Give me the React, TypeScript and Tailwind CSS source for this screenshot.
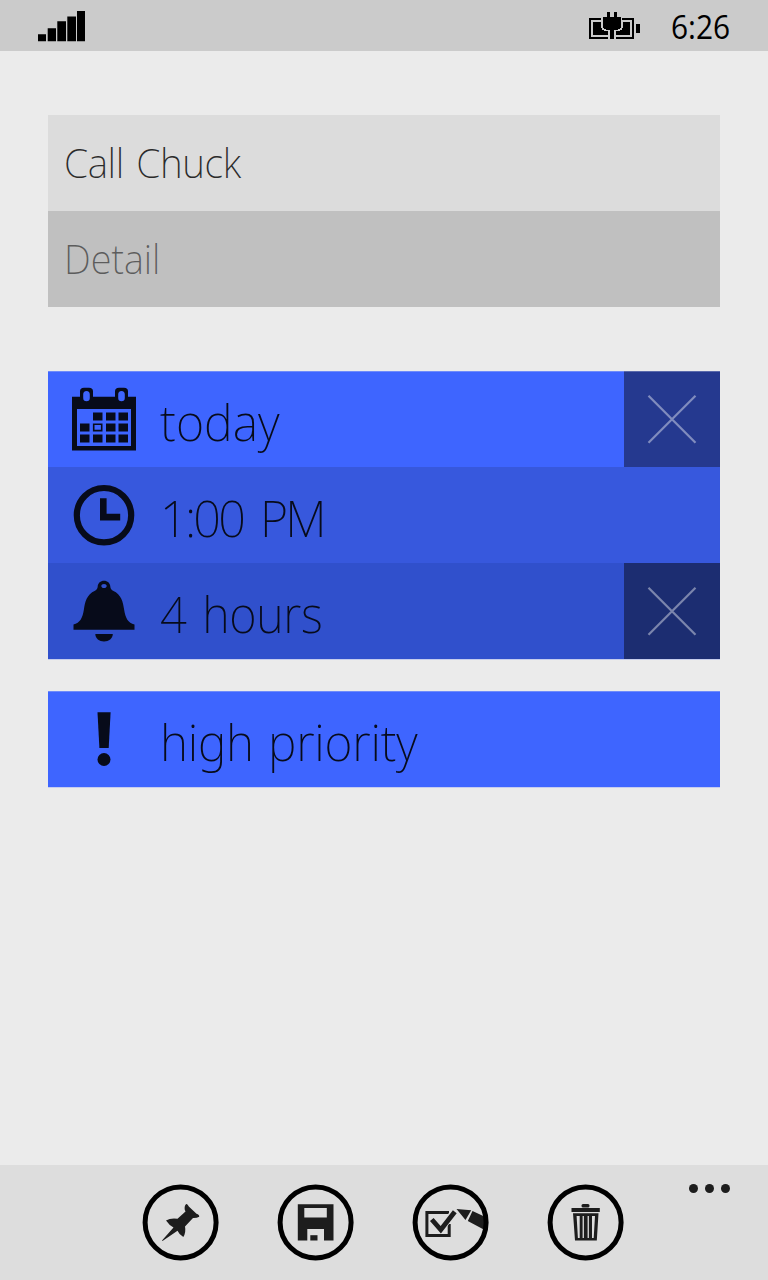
import type { ReactNode } from "react";

const INK = "#070b1a";

function Signal() {
  return (
    <svg width="48" height="32" viewBox="0 0 48 32" fill="#000">
      <path d="M0 24.200h8V31.300H0zM9.700 18.200H18V31.300H9.700zM19.300 11.300H28V31.300h-8.700zM29.300 6.400H38V31.300h-8.700zM39 .9h8v30.400h-8z" />
    </svg>
  );
}

function Battery() {
  return (
    <svg width="51" height="28" viewBox="0 0 51 28" fill="#000" shapeRendering="crispEdges">
      <path d="M0 6h12v2H2v17h17v2H0zM33 6h12v21H27v-2h16V8H33z" />
      <path d="M4 10h8v6h1v2h2v1h4v4H4zM34 10h7v13H27v-4h4v-1h2v-2h1z" />
      <path d="M18 0h3v5h4V0h3v5h4v11h-1v1h-2v1h-4v9h-4v-9h-4v-1h-2v-1h-1V5h4zM47 12h4v9h-4z" />
    </svg>
  );
}

function CalendarIcon() {
  return (
    <svg width="64" height="64" viewBox="0 -.4 64 64" fill={INK}>
      <path
        fillRule="evenodd"
        d="M0 9.300h8V4q0-3.700 4-3.700h5q4 0 4 3.700v5.300h22V4q0-3.700 4-3.700h5q4 0 4 3.700v5.300h8V63H0zM5 21.500v37h54v-37zM14.500 3.500q-3.300 0-3.300 3.500v3.500q0 3.300 3.300 3.300t3.300-3.300V7q0-3.500-3.300-3.500zM49.500 3.500q-3.300 0-3.300 3.500v3.500q0 3.300 3.300 3.300t3.300-3.300V7q0-3.500-3.300-3.500z"
      />
      <path d="M21 25h9.500v8H21zM34 25h9.500v8H34zM46.500 25H56v8h-9.500zM8 36h9.500v8H8zM34 36h9.500v8H34zM46.500 36H56v8h-9.500zM8 47h9.500v8H8zM21 47h9.500v8H21zM34 47h9.500v8H34zM46.500 47H56v8h-9.500z" />
      <path d="M21.700 36.800h8v6.400h-8z" fill="none" stroke={INK} strokeWidth="1.600" />
    </svg>
  );
}

function ClockIcon() {
  return (
    <svg width="64" height="64" viewBox="0 -.2 64 64">
      <circle cx="32" cy="32" r="27.200" fill="none" stroke={INK} strokeWidth="6.200" />
      <path d="M28 15h6.600v15.600h13.600v6.800H28z" fill={INK} />
    </svg>
  );
}

function BellIcon() {
  return (
    <svg width="64" height="64" viewBox="0 0 64 64" fill={INK}>
      <path
        fillRule="evenodd"
        d="M32 1.700c-3.500 0-6.100 2.300-6.300 5.800-.2 2.100-1 3.300-2.700 4.200C14.500 15.500 13 23 11.900 30.500 10.600 39 8 44 1.500 45.500v5.300h61v-5.300c-6.500-1.500-9.100-6.500-10.400-15C51 23 49.500 15.500 41 11.700c-1.700-.9-2.500-2.100-2.700-4.200-.2-3.500-2.800-5.800-6.300-5.800zM32 4.900c1.600 0 2.700.8 2.700 2.100S33.600 9.100 32 9.100 29.300 8.300 29.300 7s1.100-2.100 2.700-2.100z"
      />
      <path d="M23.300 55h17.500c0 4.500-4 7.500-8.800 7.500S23.300 59.500 23.300 55z" />
    </svg>
  );
}

function PriorityIcon() {
  return (
    <svg width="64" height="64" viewBox="0 0 64 64" fill={INK}>
      <path d="M25.500 5.200h13.100L36.700 41h-9.300z" />
      <circle cx="32" cy="52.500" r="6.500" />
    </svg>
  );
}

function RemoveButton({ color }: { color: string }) {
  return (
    <button aria-label="remove" className={`flex h-24 w-24 items-center justify-center ${color}`}>
      <svg width="50" height="50" viewBox="0 -.3 50 50" stroke="#fff" strokeOpacity=".42" strokeWidth="2.200">
        <path d="M1.500 1.500l47 47M48.500 1.500l-47 47" />
      </svg>
    </button>
  );
}

type RowProps = { icon: ReactNode; label: string; row: string; text: string; remove?: string };

function Row({ icon, label, row, text, remove }: RowProps) {
  return (
    <div className={`flex h-24 ${row}`}>
      <div className="flex h-24 w-28 items-center justify-center">{icon}</div>
      <div className={`h-24 flex-1 origin-left text-[50px] leading-[102px] font-extralight whitespace-nowrap text-[#070b1a] ${text}`}>{label}</div>
      {remove && <RemoveButton color={remove} />}
    </div>
  );
}

function BarButton({ label, children }: { label: string; children: ReactNode }) {
  return (
    <button aria-label={label} className="h-[78px] w-[78px]">
      <svg width="78" height="78" viewBox="0 0 78 78" fill="#1d1d1d">
        {children}
        <circle cx="39.600" cy="39.400" r="35.500" fill="none" stroke="#000" strokeWidth="5" />
      </svg>
    </button>
  );
}

export default function App() {
  return (
    <div className="flex h-[1280px] w-[768px] flex-col overflow-hidden bg-[#ebebeb] font-['Noto_Sans',sans-serif]">
      <header className="flex h-[51px] items-start bg-[#cbcbcb] pt-[10px] pr-[38px] pl-[38px]">
        <Signal />
        <div className="mt-[2px] ml-auto">
          <Battery />
        </div>
        <div className="ml-[31px] w-[59px] origin-left scale-x-[0.935] font-['Open_Sans',sans-serif] text-[32px] leading-[33px] whitespace-nowrap text-black">6:26</div>
      </header>

      <main className="flex flex-1 flex-col px-12 pt-16">
        <div className="h-24 bg-[#dcdcdc] pl-4">
          <div className="origin-left scale-x-[0.95] text-[41px] leading-[94px] font-extralight tracking-[-0.400px] [word-spacing:3px] text-[#2b2b2b]">Call Chuck</div>
        </div>
        <div className="h-24 bg-[#c0c0c0] pl-4">
          <div className="origin-left scale-x-[0.93] text-[41px] leading-[94px] font-extralight text-[#5c5c5c]">Detail</div>
        </div>

        <div className="mt-16 shadow-[0_1px_0_#c5ccec]">
          <Row
            icon={<CalendarIcon />}
            label="today"
            row="bg-[#3e65ff] shadow-[inset_0_1px_0_#6f8bfa]"
            text="scale-x-[0.97]"
            remove="bg-[#25398f] shadow-[inset_0_1px_0_#5a6aab]"
          />
          <Row icon={<ClockIcon />} label="1:00 PM" row="bg-[#3758dd]" text="scale-x-[0.97] tracking-[-2.800px] [word-spacing:7px]" />
          <Row icon={<BellIcon />} label="4 hours" row="bg-[#3050cc]" text="scale-x-[0.94] tracking-[-0.300px] [word-spacing:4px]" remove="bg-[#1c2d71]" />
        </div>

        <div className="mt-8 shadow-[0_1px_0_#c5ccf0]">
          <Row icon={<PriorityIcon />} label="high priority" row="bg-[#3e65ff] shadow-[inset_0_1px_0_#6f8bfa]" text="scale-x-[0.96] tracking-[-0.200px] [word-spacing:2px]" />
        </div>
      </main>

      <footer className="flex h-[115px] bg-[#dddddd] pt-[18px] pl-[141px]">
        <div className="flex gap-[57px]">
          <BarButton label="pin">
            <path d="M43.700 26.500q-.5-4 1.500-5.500 1.500-.3 2.600 2.500l7.700 7.200q3 .8 2.700 3-2.500 1.500-6.200 1.300l-8 8.500q1.200 6-1.700 10.400-3.800-1.900-5.800-6.200L21.500 58l-.5-.5 11.500-13q-4.500-2.500-7.500-7 4.500-2.800 11.500-1.800l8-7.200z" />
          </BarButton>
          <BarButton label="save">
            <path fillRule="evenodd" d="M21.800 21.300h35.700V57.500h-9.500V46H31.300v11.500h-9.500zM28.300 25v9.500h22.500V25z" />
            <path d="M34.300 52.200h7.200v5.300h-7.200z" />
          </BarButton>
          <BarButton label="select">
            <path d="M38 29.500H15.900v23h22.300V41" fill="none" stroke="#1d1d1d" strokeWidth="3" />
            <path d="M23.300 33.700l6.500 7.400L41.200 25.500l5.500 4.200L38.500 40.500l-3.800 5-4 3.500L20 38z" fill="#dddddd" />
            <path d="M20.800 36.500l9 10.300L43.800 28.800" fill="none" stroke="#1d1d1d" strokeWidth="4.800" />
            <path d="M45.500 26l14.700 1.200L54.500 37zM61.500 28l14 6.500v13.500L56.800 38z" />
          </BarButton>
          <BarButton label="delete">
            <rect x="35.500" y="21" width="8" height="3.500" rx="1.500" />
            <path fillRule="evenodd" d="M25.500 25h28.300v4H25.500zM27 30.300h25.500L50.800 57.500H29zM30.600 33l1.300 22h1.800V33zM36.600 33v22h1.300V33zM41.600 33v22h1.300V33zM46 33v22h1.700L49 33z" />
          </BarButton>
        </div>
        <svg className="mr-[37px] ml-auto" width="42" height="12" viewBox="0 0 42 12" fill="#1d1d1d">
          <circle cx="4.500" cy="5.500" r="4.500" />
          <circle cx="20.500" cy="5.500" r="4.500" />
          <circle cx="36.500" cy="5.500" r="4.500" />
        </svg>
      </footer>
    </div>
  );
}
